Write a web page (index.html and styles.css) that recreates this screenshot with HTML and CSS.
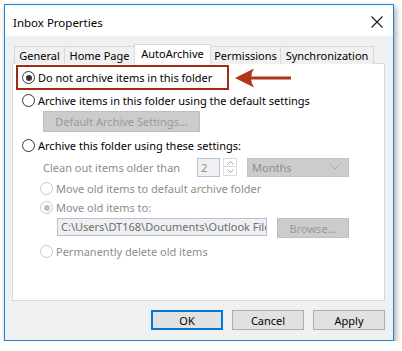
FILE: index.html
```html
<!DOCTYPE html>
<html>
<head>
<meta charset="utf-8">
<link rel="stylesheet" href="styles.css">
</head>
<body>
<div class="window">
  <div class="titlebar">
    <span class="title">Inbox Properties</span>
    <svg class="close" width="12" height="12" viewBox="0 0 12 12"><path d="M0.5 0.5 L11.5 11.5 M11.5 0.5 L0.5 11.5" stroke="#1a1a1a" stroke-width="1.1" fill="none"/></svg>
  </div>
  <div class="body">
    <div class="tabs">
      <div class="tab t-general">General</div>
      <div class="tab t-home">Home Page</div>
      <div class="tab t-auto active">AutoArchive</div>
      <div class="tab t-perm">Permissions</div>
      <div class="tab t-sync">Synchronization</div>
    </div>
    <div class="panel">
      <div class="highlight">
        <div class="row r1"><span class="radio checked"></span><span>Do not archive items in this folder</span></div>
      </div>
      <svg class="arrow" width="60" height="22" viewBox="0 0 60 22"><path d="M57 11 H16" stroke="#b0351a" stroke-width="3" fill="none"/><path d="M1 11 L20 1.5 Q14 11 20 20.5 Z" fill="#b0351a"/></svg>
      <div class="row r2"><span class="radio"></span><span>Archive items in this folder using the default settings</span></div>
      <div class="btn disabled defbtn">Default Archive Settings...</div>
      <div class="row r3"><span class="radio"></span><span>Archive this folder using these settings:</span></div>
      <div class="clean">
        <span class="dis-text label">Clean out items older than</span>
        <span class="spin-input">2</span>
        <span class="spin"><span class="sp up"><svg width="7" height="4" viewBox="0 0 7 4"><path d="M0.5 3.5 L3.5 0.5 L6.5 3.5" fill="none" stroke="#9a9a9a"/></svg></span><span class="sp down"><svg width="7" height="4" viewBox="0 0 7 4"><path d="M0.5 0.5 L3.5 3.5 L6.5 0.5" fill="none" stroke="#9a9a9a"/></svg></span></span>
        <span class="select">Months<svg width="10" height="6" viewBox="0 0 10 6"><path d="M0.5 0.5 L5 5 L9.5 0.5" fill="none" stroke="#a8a8a8"/></svg></span>
      </div>
      <div class="row sub r4"><span class="radio dis"></span><span class="dis-text">Move old items to default archive folder</span></div>
      <div class="row sub r5"><span class="radio dis dchecked"></span><span class="dis-text">Move old items to:</span></div>
      <div class="pathrow">
        <span class="path">C:\Users\DT168\Documents\Outlook Files</span>
        <span class="btn disabled browse">Browse...</span>
      </div>
      <div class="row sub r6"><span class="radio dis"></span><span class="dis-text">Permanently delete old items</span></div>
    </div>
    <div class="buttons">
      <div class="btn ok">OK</div>
      <div class="btn">Cancel</div>
      <div class="btn">Apply</div>
    </div>
  </div>
</div>
</body>
</html>
```
FILE: styles.css
```css
html, body {
  margin: 0;
  padding: 0;
  background: #ffffff;
}
body {
  font-family: "Noto Sans", "Open Sans", sans-serif;
  font-size: 11px;
  color: #000;
  white-space: nowrap;
}
.window {
  margin: 4px 0 0 4px;
  width: 388px;
  height: 335px;
  border: 1px solid #1883d7;
  box-shadow: 2px 3px 6px rgba(0,0,0,0.35);
  background: #f0f0f0;
  display: flex;
  flex-direction: column;
}
.titlebar {
  height: 31px;
  background: #fff;
  display: flex;
  align-items: center;
  justify-content: space-between;
  padding: 0 10px 0 8px;
}
.title {
  font-size: 11.5px;
  padding-top: 3px;
}
.close {
  margin-top: 3px;
}
.body {
  flex: 1;
  display: flex;
  flex-direction: column;
  padding: 8px 8px 0 7px;
}
.tabs {
  display: flex;
  align-items: flex-end;
  margin-left: 2px;
  height: 20px;
  position: relative;
  z-index: 2;
  margin-bottom: -1px;
}
.tab {
  height: 18px;
  box-sizing: border-box;
  border: 1px solid #d9d9d9;
  border-bottom: none;
  background: #f0f0f0;
  line-height: 17px;
  margin-right: -1px;
  text-align: center;
  flex: none;
}
.tab.active {
  height: 21px;
  background: #fff;
  margin-bottom: -1px;
  line-height: 17px;
  position: relative;
  z-index: 3;
}
.t-general { width: 51px; }
.t-home { width: 71px; }
.t-auto { width: 77px; }
.t-perm { width: 71px; }
.t-sync { width: 94px; }
.panel {
  height: 238px;
  box-sizing: border-box;
  background: #fff;
  border: 1px solid #d9d9d9;
  position: relative;
  padding: 1px 0 0 3px;
}
.highlight {
  width: 213px;
  height: 25px;
  box-sizing: border-box;
  border: 2px solid #a22a12;
  display: flex;
  align-items: center;
  padding-left: 4px;
}
.arrow {
  position: absolute;
  left: 221px;
  top: 3px;
}
.row {
  display: flex;
  align-items: center;
  height: 19px;
}
.row .radio {
  margin-right: 3px;
}
.r1 { height: 20px; }
.r2 { padding-left: 6px; height: 20px; }
.r3 { padding-left: 6px; height: 22px; margin-top: 1px; }
.sub { padding-left: 24px; }
.radio {
  width: 11px;
  height: 11px;
  border: 1px solid #333;
  border-radius: 50%;
  box-sizing: content-box;
  position: relative;
  background: #fff;
  flex: none;
}
.radio.checked::after {
  content: "";
  position: absolute;
  left: 2.5px;
  top: 2.5px;
  width: 6px;
  height: 6px;
  border-radius: 50%;
  background: #333;
}
.radio.dis {
  border-color: #c8c8c8;
}
.radio.dchecked::after {
  content: "";
  position: absolute;
  left: 2.5px;
  top: 2.5px;
  width: 6px;
  height: 6px;
  border-radius: 50%;
  background: #c0c0c0;
}
.dis-text {
  color: #8d8d8d;
}
.btn {
  width: 72px;
  height: 20px;
  box-sizing: border-box;
  border: 1px solid #adadad;
  background: #e1e1e1;
  display: flex;
  align-items: center;
  justify-content: center;
}
.btn.disabled {
  background: #cccccc;
  border-color: #bfbfbf;
  color: #9a9a9a;
}
.defbtn {
  width: 157px;
  height: 21px;
  margin: 1px 0 2px 27px;
}
.clean {
  display: flex;
  align-items: center;
  height: 22px;
  padding-left: 27px;
  margin-top: 0px;
}
.label {
  width: 154px;
}
.spin-input {
  width: 23px;
  height: 19px;
  box-sizing: border-box;
  border: 1px solid #a9c3e0;
  background: #f0f0f0;
  color: #8d8d8d;
  padding-left: 3px;
  line-height: 17px;
}
.spin {
  display: flex;
  flex-direction: column;
  margin-left: 3px;
  gap: 0;
}
.sp {
  width: 14px;
  height: 9px;
  box-sizing: border-box;
  border: 1px solid #dcdcdc;
  display: flex;
  align-items: center;
  justify-content: center;
}
.sp.down { border-top: none; height: 9px; }
.select {
  margin-left: 10px;
  width: 102px;
  height: 19px;
  box-sizing: border-box;
  background: #cccccc;
  border: 1px solid #c4c4c4;
  color: #8d8d8d;
  display: flex;
  align-items: center;
  justify-content: space-between;
  padding: 0 8px 0 4px;
}
.r4 { margin-top: 1px; }
.pathrow {
  display: flex;
  align-items: flex-start;
  padding-left: 41px;
  height: 24px;
  margin-top: 1px;
}
.path {
  width: 210px;
  height: 18px;
  box-sizing: border-box;
  border: 1px solid #a9c3e0;
  background: #f0f0f0;
  color: #6d6d6d;
  padding-left: 3px;
  line-height: 16px;
  white-space: nowrap;
  overflow: hidden;
  flex: none;
}
.browse {
  margin-left: 10px;
  width: 72px;
  height: 20px;
}
.buttons {
  display: flex;
  justify-content: flex-end;
  gap: 9px;
  margin-top: 9px;
}
.btn.ok {
  border: 2px solid #0078d7;
}
```
